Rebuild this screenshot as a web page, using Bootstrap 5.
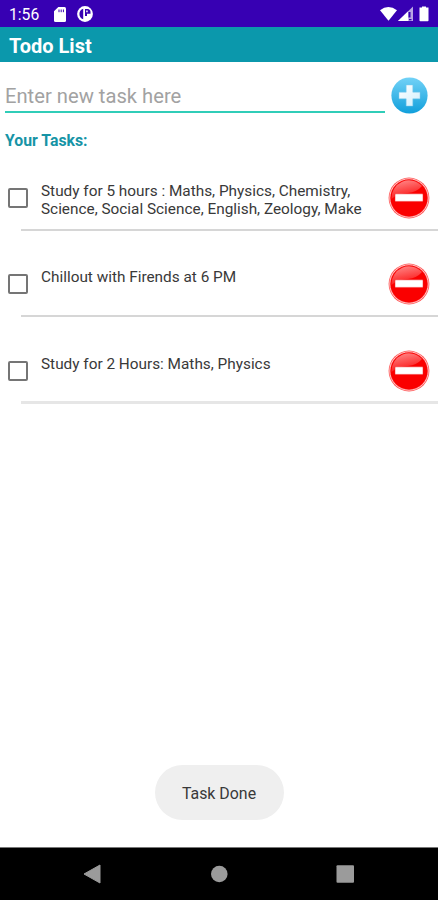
<!DOCTYPE html>
<html lang="en">
<head>
<meta charset="utf-8">
<meta name="viewport" content="width=device-width, initial-scale=1">
<title>Todo List</title>
<link href="https://cdn.jsdelivr.net/npm/bootstrap@5.3.0/dist/css/bootstrap.min.css" rel="stylesheet">
<style>
body{font-family:Roboto,"Noto Sans",sans-serif;color:#393939;height:900px;overflow:hidden}
svg{display:block;flex:none}
.status-bar{height:27px;background:#3700b3;font-size:15.7px;line-height:27px;padding:1px 9px 0 9px}
.clock{width:45px}
.app-bar{height:35px;background:#0b98ac;font-size:20px;line-height:38px;padding-left:9px}
.entry-row{height:58px;padding:15px 10px 0 5px}
.task-input{width:380px;height:36px;border:0;border-bottom:2px solid #30cdb8;border-radius:0;padding:4px 0 0;font-size:20.2px;color:#333;background:transparent}
.task-input::placeholder{color:#a2a2a2;opacity:1}
.task-input:focus{box-shadow:none;border-color:#30cdb8}
.tasks-title{height:24px;font-size:15.8px;line-height:24px;padding-left:5px;margin:9px 0 0;color:#1694a6}
.task-list{margin-top:-8.5px}
.task-row{height:86.5px;padding:0 8px;position:relative}
.task-row::after{content:"";position:absolute;left:21px;right:0;bottom:.5px;height:2px;background:#d6d6d6}
.task-row:last-child::after{height:3px;bottom:0;background:#e6e6e6}
.task-check{width:20px;height:20px;margin:43px 0 0;border:2px solid #757575;border-radius:2px!important;flex:none}
.task-text{width:336px;height:36px;margin:37.4px 0 0 13px;font-size:15.35px;line-height:18px;overflow:hidden;white-space:nowrap}
.round-btn{border:0;padding:0;background:none}
.remove-btn{margin:32px 0 0 auto}
.toast-pill{width:129px;height:55px;border-radius:28px;background:#efefef;font-size:15.9px;padding-top:2px;margin-bottom:27px}
.nav-keys{height:53px;background:#000;border-top:1px solid #777}
</style>
</head>
<body class="bg-white d-flex flex-column">
<svg width="0" height="0" class="position-absolute" aria-hidden="true">
<defs>
<linearGradient id="blue" x1="0" y1="0" x2="0" y2="1"><stop stop-color="#72d2f7"/><stop offset="1" stop-color="#109fdb"/></linearGradient>
<linearGradient id="plus" x1="0" y1="0" x2="1" y2="1"><stop stop-color="#fff"/><stop offset="1" stop-color="#d0effc"/></linearGradient>
<linearGradient id="gloss" x1=".15" y1="0" x2=".5" y2="1"><stop stop-color="#ff8a8a"/><stop offset="1" stop-color="#fb1010"/></linearGradient>
<symbol id="remove" viewBox="0 0 42 42">
<circle cx="21" cy="21" r="20.4" fill="#ff5a5a"/>
<circle cx="21" cy="21" r="19.2" fill="none" stroke="#ffc4c4" stroke-width="1"/>
<circle cx="21" cy="21" r="18.5" fill="#fa0000"/>
<path d="M3.5 22A17.6 17.6 0 0 1 34 9Q29 15 20 16Q9 17 3.5 22Z" fill="url(#gloss)"/>
<rect x="7" y="16.8" width="28" height="7.6" rx=".7" fill="#fff" stroke="#f02020" stroke-width=".5"/>
</symbol>
</defs>
</svg>
<header>
<div class="status-bar d-flex align-items-center text-white">
<span class="clock">1:56</span>
<svg width="12" height="15" viewBox="0 0 12 15"><path fill="#fff" d="M4.3 0H10.5Q12 0 12 1.5V13.5Q12 15 10.5 15H1.5Q0 15 0 13.5V4.3Z"/><path stroke="#3700b3" stroke-width="1" d="M5 2.5v2.7M7.2 2.5v2.7M9.4 2.5v2.7"/></svg>
<svg class="ms-2 me-auto" width="19" height="16" viewBox="-3 0 19 16"><circle cx="8" cy="8" r="7.9" fill="#fff"/><path d="M6.2 2.7A5.6 5.6 0 0 0 6.2 13.3ZM8 3h2.5q3 .3 3 3v1.7H10V10H8Z" fill="#3700b3"/><path d="M9.2 4.5h1.5v1.8H9.2z" fill="#fff"/></svg>
<svg width="50" height="16" viewBox="-1 0 50 16"><path fill="#fff" d="M0 4.3Q8.3-2.5 17 4.3L8.5 14.8Z"/><path fill="#b9a6e4" d="M33 .5V15H18Z"/><path fill="#fff" d="M28.2 5.2V15H18Z"/><path fill="#3700b3" d="M28.5 6h2v5.5h-2zM29 13h2.5v1.2H29z"/><path fill="#fff" d="M42 1.5V.5h4v1h2.5v13q0 .8-.8.8h-7.4q-.8 0-.8-.8v-13Z"/></svg>
</div>
<h1 class="app-bar fw-bold text-white mb-0">Todo List</h1>
</header>
<main class="flex-grow-1 d-flex flex-column">
<div class="entry-row d-flex">
<input class="task-input form-control" placeholder="Enter new task here" aria-label="New task">
<button class="round-btn ms-auto align-self-start" aria-label="Add task"><svg width="37" height="37" viewBox="0 0 37 37"><circle cx="18.5" cy="18.5" r="18.1" fill="url(#blue)"/><path d="M15.2 8h6.6v7.2H29v6.6h-7.2V29h-6.6v-7.2H8v-6.6h7.2Z" fill="url(#plus)" stroke="#83cbed" stroke-width=".5"/></svg></button>
</div>
<h2 class="tasks-title fw-bold">Your Tasks:</h2>
<div class="task-list">
<div class="task-row d-flex align-items-start">
<input type="checkbox" class="task-check form-check-input" aria-label="Task 1">
<div class="task-text">Study for 5 hours : Maths, Physics, Chemistry,<br>Science, Social Science, English, Zeology, Make</div>
<button class="round-btn remove-btn" aria-label="Remove"><svg width="42" height="42"><use href="#remove"/></svg></button>
</div>
<div class="task-row d-flex align-items-start">
<input type="checkbox" class="task-check form-check-input" aria-label="Task 2">
<div class="task-text">Chillout with Firends at 6 PM</div>
<button class="round-btn remove-btn" aria-label="Remove"><svg width="42" height="42"><use href="#remove"/></svg></button>
</div>
<div class="task-row d-flex align-items-start">
<input type="checkbox" class="task-check form-check-input" aria-label="Task 3">
<div class="task-text">Study for 2 Hours: Maths, Physics</div>
<button class="round-btn remove-btn" aria-label="Remove"><svg width="42" height="42"><use href="#remove"/></svg></button>
</div>
</div>
<div class="toast-pill d-flex align-items-center justify-content-center align-self-center mt-auto" role="status">Task Done</div>
</main>
<nav class="nav-keys">
<svg width="438" height="52" viewBox="0 0 438 52" fill="#9b9b9b"><path d="M84 26L100 17V35Z" stroke="#9b9b9b" stroke-linejoin="round"/><circle cx="219.3" cy="26" r="8.3"/><rect x="336.5" y="17.3" width="17.5" height="17.5" rx="1"/></svg>
</nav>
<script src="https://cdn.jsdelivr.net/npm/bootstrap@5.3.0/dist/js/bootstrap.bundle.min.js"></script>
</body>
</html>
